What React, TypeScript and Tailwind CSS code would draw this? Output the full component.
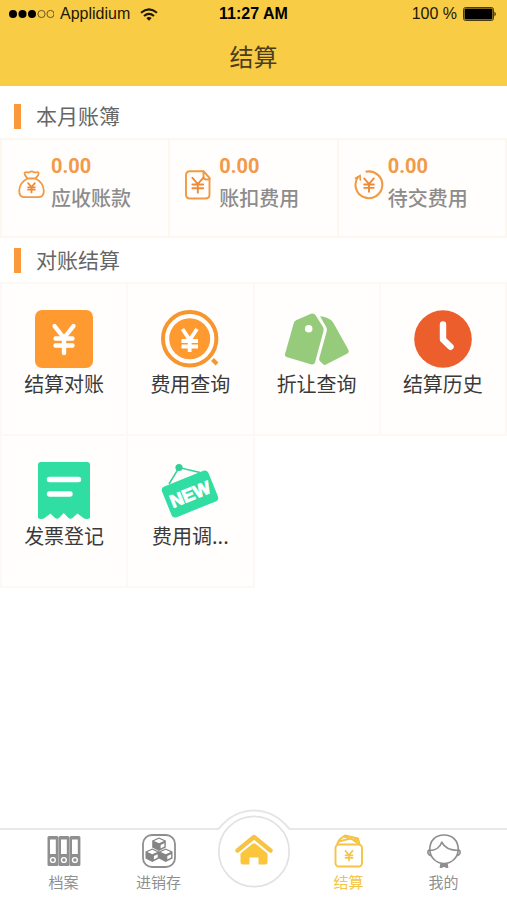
import React from 'react';

type IconProps = { className?: string };

function YenMark({ x, y, size, width }: { x: number; y: number; size: number; width: number }) {
  // x, y is the joint of the two arms, size is half of the mark's width
  return <path d={`M${x - size} ${y - size * 1.15}L${x} ${y}L${x + size} ${y - size * 1.15}M${x} ${y}V${y + size * 1.6}M${x - size} ${y + size * 0.1}H${x + size}M${x - size} ${y + size * 0.8}H${x + size}`} fill="none" strokeWidth={width} strokeLinecap="round" strokeLinejoin="round" />;
}

function BagIcon() {
  return <svg viewBox="0 0 30 30" className="size-[30px] shrink-0" fill="none" stroke="#f09a45" strokeWidth="1.8" strokeLinejoin="round" aria-hidden="true">
      <path d="M10.500 8.500C9 6.500 6.800 4.500 7.800 2.800C9 1.200 11 3.200 12.500 2.200C14 1.200 15.500 1.200 17 2.200C18.500 3.200 20.500 1.200 21.500 2.800C22.500 4.500 20 6.500 18.500 8.500Z" />
      <path d="M10.500 8.500C5.500 11 2.500 15.500 2.200 20.500C2 25 4 27.200 8 27.200H21C25 27.200 27 25 26.800 20.500C26.500 15.500 23.500 11 18.500 8.500" />
      <g stroke="#ee8a35"><YenMark x={14.500} y={17} size={3.400} width={1.700} /></g>
    </svg>;
}

function BillIcon() {
  return <svg viewBox="0 0 30 30" className="size-[30px] shrink-0" fill="none" stroke="#f09a45" strokeWidth="1.9" strokeLinejoin="round" aria-hidden="true">
      <path d="M18 1.200H4Q-.0 1.200 0 5.200" transform="translate(1 0)" />
      <path d="M1 5V24.500Q1 28.500 5 28.500H20.500Q24.500 28.500 24.500 24.500V8" />
      <path d="M18.500 1.200L24.500 8V9.500H21.500Q18.500 9.500 18.500 6.500Z" />
      <g stroke="#ee8a35"><YenMark x={12.800} y={14} size={5.400} width={1.900} /></g>
    </svg>;
}

function CycleIcon() {
  return <svg viewBox="0 0 30 30" className="size-[30px] shrink-0" fill="none" stroke="#f09a45" strokeWidth="2.100" strokeLinecap="round" aria-hidden="true">
      <path d="M12.500 1.600A13.400 13.400 0 1 1 4 7" />
      <path d="M1.500 8.200L6 5.600L6.300 10" strokeWidth="1.700" />
      <g stroke="#ee8a35"><YenMark x={15} y={14} size={4.800} width={1.900} /></g>
    </svg>;
}

function StatementIcon() {
  return <svg viewBox="0 0 58 58" className="h-[58px] w-[58px]" aria-hidden="true">
      <rect width="58" height="58" rx="7" fill="#ff9a30" />
      <path d="M19.500 16L29 28L38.500 16M29 28V43M20.500 28.500H37.500M20.500 35.500H37.500" fill="none" stroke="#fff" strokeWidth="4.400" strokeLinecap="round" strokeLinejoin="round" />
    </svg>;
}

function FeeSearchIcon() {
  return <svg viewBox="0 0 58 58" className="h-[58px] w-[58px]" aria-hidden="true">
      <circle cx="28.700" cy="28.700" r="26.700" fill="#fff" stroke="#f7962f" strokeWidth="4" />
      <circle cx="28.700" cy="28.700" r="20.500" fill="#ff9a30" />
      <path d="M51.500 49.500L56 54" stroke="#f7962f" strokeWidth="4" />
      <path d="M21.500 19L28.700 30L36 19M28.700 29V42M20.500 31H37M20.500 36.500H37" fill="none" stroke="#fff" strokeWidth="3.800" />
    </svg>;
}

function TagsIcon() {
  return <svg viewBox="0 0 66 58" className="h-[58px] w-[66px]" fill="#97cb7c" aria-hidden="true">
      <path d="M12.500 10L27 3.800Q30 3 31.800 5.500L39 17Q40 18.800 39.500 21L31 52.500Q30.200 55 27.500 54.500L2.500 47Q.3 46.200 1 44L9.800 13Q10.500 10.800 12.500 10Z" />
      <path d="M36 6.200Q43.500 7 47.500 10.500Q49 12 50 14L64.500 40Q65.500 42.200 63.500 43.500L42 54.500Q40.500 55.500 39 54L35.800 51Q34.800 50 35.300 48L42.800 21Q43.300 18.800 42.200 17Z" />
      <circle cx="24.700" cy="18.700" r="3.800" fill="#fff" />
    </svg>;
}

function HistoryIcon() {
  return <svg viewBox="0 0 58 58" className="h-[58px] w-[58px]" aria-hidden="true">
      <circle cx="29" cy="29" r="28.800" fill="#ec5f2c" />
      <path d="M29 14.500V29.500L36.500 36.800" fill="none" stroke="#fff" strokeWidth="6.400" strokeLinecap="round" strokeLinejoin="round" />
    </svg>;
}

function InvoiceIcon() {
  return <svg viewBox="0 0 58 58" className="h-[58px] w-[58px]" aria-hidden="true">
      <path d="M3 3Q3 0 6 0H52Q55 0 55 3V56Q53 57.500 49 56.500L42.500 51.500L37.500 56Q35.500 57.500 33.500 56L28.800 51L24 56Q22 57.500 20 56L15.500 51.500L9 56.500Q5 57.500 3 56Z" fill="#30dda2" />
      <path d="M14.500 17.500H43.500M14.500 32H35" stroke="#fff" strokeWidth="5.400" strokeLinecap="round" />
    </svg>;
}

function NewSignIcon() {
  return <svg viewBox="0 0 58 58" className="h-[58px] w-[58px]" aria-hidden="true">
      <path d="M8 22L18 5.500L39 10.500" fill="none" stroke="#35cf9c" strokeWidth="1.500" />
      <circle cx="18" cy="5.500" r="3.600" fill="#30cf9c" />
      <g transform="rotate(-22 29 32)">
        <rect x="4" y="15.500" width="50" height="33" rx="4" fill="#30dda2" />
        <text x="29" y="38.500" textAnchor="middle" fill="#fff" stroke="#fff" strokeWidth="1" fontSize="18" fontWeight="700" fontFamily="Liberation Sans, sans-serif">NEW</text>
      </g>
    </svg>;
}

function FilesIcon() {
  return <svg viewBox="0 0 34 34" className="size-[34px]" aria-hidden="true">
      {[0.500, 11.500, 22.500].map(x => <g key={x}>
          <rect x={x} y="2" width="10.900" height="30" rx="1.500" fill="#8f8f8f" />
          <rect x={x + 2.500} y="5.500" width="5.800" height="14.500" fill="#fff" />
          <circle cx={x + 5.400} cy="26" r="2.400" fill="#8f8f8f" stroke="#fff" strokeWidth="1.400" />
        </g>)}
    </svg>;
}

function Cube({ x, y }: { x: number; y: number }) {
  return <g transform={`translate(${x} ${y})`}>
      <path d="M0 0L6.800 3V10L0 13.500L-6.800 10V3Z" fill="#858585" />
      <path d="M0 1.200L5 3.500L0 5.800L-5 3.500Z" fill="#fff" />
      <path d="M1.600 7.600L5.400 5.800V9L1.600 11Z" fill="#fff" />
    </g>;
}

function StockIcon() {
  return <svg viewBox="0 0 34 34" className="size-[34px]" aria-hidden="true">
      <rect x="1" y="1" width="32" height="32" rx="9" fill="none" stroke="#8f8f8f" strokeWidth="1.800" />
      <Cube x={17} y={3.500} />
      <Cube x={10.300} y={14.500} />
      <Cube x={23.700} y={14.500} />
    </svg>;
}

function WalletIcon() {
  return <svg viewBox="0 0 34 34" className="size-[34px]" fill="none" stroke="#f3c445" strokeWidth="1.900" strokeLinejoin="round" aria-hidden="true">
      <rect x="3.500" y="10.500" width="26.500" height="22" rx="3.500" />
      <path d="M5 10.500L7.500 5.500L13 1.500L26 4.500L27.500 10" />
      <path d="M6.500 7.500L18.500 4.500L26.500 9.500M12 2.500L17 4.500L26 6.500" />
      <YenMark x={17} y={21} size={3.600} width={1.600} />
    </svg>;
}

function ProfileIcon() {
  return <svg viewBox="0 0 34 34" className="size-[34px]" fill="none" stroke="#8f8f8f" strokeWidth="1.700" strokeLinejoin="round" aria-hidden="true">
      <path d="M2.800 15.500C2.800 6.500 8.500 1 17 1S31.200 6.500 31.200 15.500C31.200 23.500 24.500 29.500 17 29.500S2.800 23.500 2.800 15.500Z" />
      <path d="M2.500 16.500C8 16.500 13 13.500 14.800 8.200C17 13 23 16.500 31.500 16.500" />
      <path d="M2.800 15.500Q.5 16.500 1 19Q2 21.700 4.500 21.500M31.200 15.500Q33.500 16.500 33 19Q32 21.700 29.500 21.500" />
      <path d="M14 30L13.500 33.500L17 32L20.500 33.500L20 30Z" fill="#8f8f8f" />
    </svg>;
}

function HomeButton() {
  return <a href="#home" aria-label="首页" className="absolute bottom-0 left-1/2 -translate-x-1/2">
      <svg viewBox="0 0 88 92" className="block h-[92px] w-[88px]" aria-hidden="true">
        <path d="M8.500 21.500C18 10 28 2.500 44 2.500S70 10 79.500 21.500V60H8.500Z" fill="#fff" />
        <path d="M5 21H8.500C17 10.500 28 2.500 44 2.500S71 10.500 79.500 21H83" fill="none" stroke="#e6e6e6" strokeWidth="2" />
        <circle cx="44" cy="43.500" r="35.200" fill="#fff" stroke="#e2e2e2" strokeWidth="1.700" />
        <path d="M27.500 42.500L44 29L60.500 42.500" fill="none" stroke="#f6c443" strokeWidth="4.400" strokeLinecap="round" strokeLinejoin="round" />
        <path d="M30.500 45.500L42.500 35.800Q44 34.800 45.500 35.800L57.500 45.500V54Q57.500 56.500 55 56.500H48.500V49.500H39.500V56.500H33Q30.500 56.500 30.500 54Z" fill="#fbc53c" />
      </svg>
    </a>;
}

const stats = [
  { label: '应收账款', value: '0.00', icon: BagIcon },
  { label: '账扣费用', value: '0.00', icon: BillIcon },
  { label: '待交费用', value: '0.00', icon: CycleIcon }
];

const entries = [
  { label: '结算对账', icon: StatementIcon },
  { label: '费用查询', icon: FeeSearchIcon },
  { label: '折让查询', icon: TagsIcon },
  { label: '结算历史', icon: HistoryIcon },
  { label: '发票登记', icon: InvoiceIcon },
  { label: '费用调...', icon: NewSignIcon }
];

function StatusBar() {
  return <div className="grid h-7 grid-cols-3 items-center px-2 font-['Liberation_Sans',sans-serif] text-base text-[#1d1705]">
      <div className="flex items-center gap-1.5">
        <svg viewBox="0 0 46 10" className="h-2.5 w-[46px] shrink-0" aria-hidden="true">
          <circle cx="5" cy="5" r="4" fill="#000" />
          <circle cx="14.500" cy="5" r="4" fill="#000" />
          <circle cx="24" cy="5" r="4" fill="#000" />
          <circle cx="33.500" cy="5" r="3.600" fill="none" stroke="#6b571c" />
          <circle cx="42.500" cy="5" r="3.600" fill="none" stroke="#6b571c" />
        </svg>
        <span>Applidium</span>
        <svg viewBox="0 0 18 13" className="ml-1 h-[13px] w-[18px] shrink-0" fill="none" stroke="#1d1705" strokeWidth="2" aria-hidden="true">
          <path d="M1 4.800Q9-2 17 4.800M4 8Q9 3.700 14 8" />
          <path d="M6.300 10Q9 7.800 11.700 10L9 12.800Z" fill="#1d1705" stroke="none" />
        </svg>
      </div>
      <span className="text-center font-bold text-black">11:27 AM</span>
      <div className="flex items-center justify-end gap-1.5 pr-0.5">
        <span>100 %</span>
        <svg viewBox="0 0 34 14" className="h-3.5 w-[34px]" aria-hidden="true">
          <rect x=".5" y=".5" width="30" height="13" rx="2" fill="none" stroke="#4a3c10" />
          <rect x="1.500" y="1.500" width="28" height="11" rx="1" fill="#000" />
          <path d="M31.500 4.500Q34 7 31.500 9.500Z" fill="#1d1705" />
        </svg>
      </div>
    </div>;
}

function SectionTitle({ children, className }: IconProps & { children: React.ReactNode }) {
  return <div className={`flex items-center gap-[15px] pl-3.5 ${className}`}>
      <span className="h-[25px] w-[7px] bg-[#fb9a3c]" />
      <h2 className="pb-0.5 text-[21px] leading-[26px] text-[#666]">{children}</h2>
    </div>;
}

function NavItem({ label, icon: Icon, active }: { label: string; icon: () => React.ReactNode; active?: boolean }) {
  return <a href="#" aria-current={active ? 'page' : undefined} className={`flex flex-col items-center gap-1 ${active ? 'text-[#f3c445]' : 'text-[#8f8f8f]'}`}>
      <Icon />
      <span className="text-[15px] leading-5">{label}</span>
    </a>;
}

export default function App() {
  return <div className="flex min-h-screen flex-col bg-white font-['Noto_Sans_CJK_SC',sans-serif]">
      <header className="bg-[#f9cc46] pb-3">
        <StatusBar />
        <h1 className="pt-2.5 text-center text-2xl leading-9 text-[#4b3e1c]">结算</h1>
      </header>

      <main className="flex-1 pb-8">
        <section>
          <SectionTitle className="pt-4 pb-2">本月账簿</SectionTitle>
          <div className="grid grid-cols-3 border-2 border-r-0 border-[#fcf7ef]">
            {stats.map(({ label, value, icon: Icon }) => <div key={label} className="flex h-24 items-start border-r-2 border-[#fcf7ef] bg-[#fffefd] pt-3.5 pl-[15px]">
                <div className="pt-4">
                  <Icon />
                </div>
                <div className="pl-1">
                  <p className="font-['Roboto',sans-serif] text-xl leading-6 font-bold text-[#f29a48]">{value}</p>
                  <p className="pt-1.5 text-xl leading-7 font-medium text-[#8c8c8c]">{label}</p>
                </div>
              </div>)}
          </div>
        </section>

        <section>
          <SectionTitle className="pt-2 pb-2">对账结算</SectionTitle>
          <div className="grid grid-cols-4 border-t-2 border-l-2 border-[#fcf8f3]">
            {entries.map(({ label, icon: Icon }) => <button key={label} type="button" className="flex h-38 flex-col items-center border-r-2 border-b-2 border-[#fcf8f3] bg-[#fffefd] pt-[26px]">
                <Icon />
                <span className="pt-0.5 text-xl leading-7 text-[#3a3a3a]">{label}</span>
              </button>)}
          </div>
        </section>
      </main>

      <nav className="relative grid grid-cols-5 border-t-2 border-[#e9e9e9] bg-white px-4 pt-1 pb-2">
        <NavItem label="档案" icon={FilesIcon} />
        <NavItem label="进销存" icon={StockIcon} />
        <div>
          <HomeButton />
        </div>
        <NavItem label="结算" icon={WalletIcon} active />
        <NavItem label="我的" icon={ProfileIcon} />
      </nav>
    </div>;
}
